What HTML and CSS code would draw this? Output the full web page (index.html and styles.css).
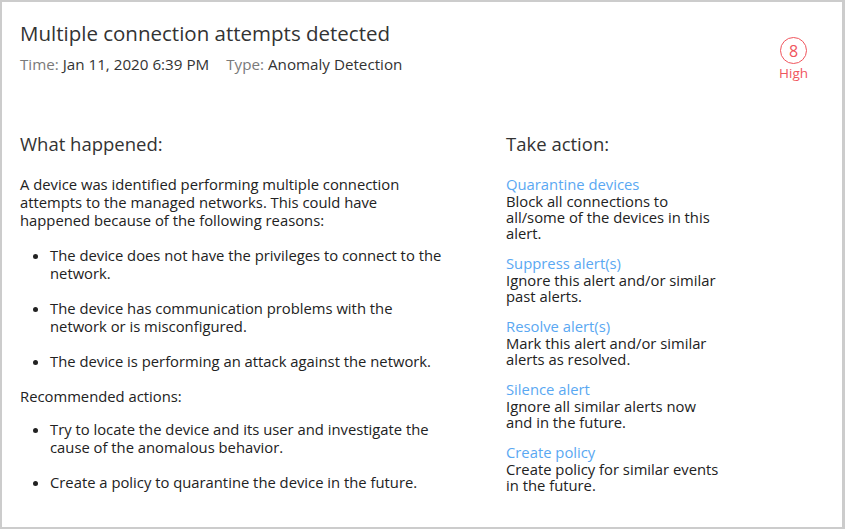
FILE: index.html
```html
<!DOCTYPE html>
<html lang="en">
<head>
  <meta charset="UTF-8">
  <title>Alert details</title>
  <link rel="stylesheet" href="styles.css">
</head>
<body>
  <div class="alert-card">
    <!-- Header -->
    <div class="alert-header">
      <div class="alert-title-block">
        <h1 class="alert-title">Multiple connection attempts detected</h1>
        <div class="alert-meta">
          <span><span class="meta-label">Time:</span> Jan 11, 2020 6:39 PM</span>
          <span><span class="meta-label">Type:</span> Anomaly Detection</span>
        </div>
      </div>
      <div class="severity">
        <div class="severity-circle">8</div>
        <div class="severity-text">High</div>
      </div>
    </div>

    <!-- Body -->
    <div class="alert-body">
      <div class="what-happened">
        <h2>What happened:</h2>
        <p>A device was identified performing multiple connection attempts to the managed networks. This could have happened because of the following reasons:</p>
        <ul>
          <li>The device does not have the privileges to connect to the network.</li>
          <li>The device has communication problems with the network or is misconfigured.</li>
          <li>The device is performing an attack against the network.</li>
        </ul>
        <p>Recommended actions:</p>
        <ul class="recommended">
          <li>Try to locate the device and its user and investigate the cause of the anomalous behavior.</li>
          <li>Create a policy to quarantine the device in the future.</li>
        </ul>
      </div>

      <div class="take-action">
        <h2>Take action:</h2>
        <div class="action">
          <a href="#">Quarantine devices</a>
          <p>Block all connections to all/some of the devices in this alert.</p>
        </div>
        <div class="action">
          <a href="#">Suppress alert(s)</a>
          <p>Ignore this alert and/or similar past alerts.</p>
        </div>
        <div class="action">
          <a href="#">Resolve alert(s)</a>
          <p>Mark this alert and/or similar alerts as resolved.</p>
        </div>
        <div class="action">
          <a href="#">Silence alert</a>
          <p>Ignore all similar alerts now and in the future.</p>
        </div>
        <div class="action">
          <a href="#">Create policy</a>
          <p>Create policy for similar events in the future.</p>
        </div>
      </div>
    </div>
  </div>
</body>
</html>
```

FILE: styles.css
```css
/* Base */
body {
  font-family: 'Open Sans', sans-serif;
  margin: 0;
  padding: 0;
  background-color: #cccccc;
  color: #222;
}

.alert-card {
  box-sizing: border-box;
  width: 842px;
  height: 529px;
  background-color: white;
  border: 2px solid #cccccc;
  border-right: none;
  padding: 16px 18px 0 18px;
}

/* Header */
.alert-header {
  display: flex;
  justify-content: space-between;
  align-items: flex-start;
}

.alert-title {
  margin: 0;
  font-size: 20.5px;
  font-weight: 400;
  color: #333;
  line-height: 30px;
}

.alert-meta {
  display: flex;
  gap: 17px;
  margin-top: 6px;
  font-size: 15.2px;
  line-height: 20px;
  color: #333;
}

.meta-label {
  color: #7a7a7a;
}

.severity {
  display: flex;
  flex-direction: column;
  align-items: center;
  margin-top: 19px;
  margin-right: 16px;
  color: #f0555d;
}

.severity-circle {
  box-sizing: border-box;
  width: 27px;
  height: 27px;
  border: 1.5px solid #f0555d;
  border-radius: 50%;
  display: flex;
  justify-content: center;
  align-items: center;
  font-size: 16px;
}

.severity-text {
  font-size: 13.5px;
  line-height: 16px;
  margin-top: 1px;
}

/* Body columns */
.alert-body {
  display: flex;
  margin-top: 51px;
}

.alert-body h2 {
  margin: 0 0 19px;
  font-size: 18.5px;
  font-weight: 400;
  color: #333;
  line-height: 24px;
}

.what-happened {
  width: 425px;
  font-size: 14.8px;
  line-height: 18px;
}

.what-happened p {
  margin: 0;
}

.what-happened ul {
  margin: 17px 0;
  padding-left: 30px;
}

.what-happened ul.recommended {
  margin-top: 15px;
}

.what-happened li {
  margin-bottom: 17px;
}

.what-happened li:last-child {
  margin-bottom: 0;
}

.take-action {
  margin-left: 61px;
  width: 218px;
  font-size: 14.8px;
  line-height: 16px;
}

.action {
  margin-bottom: 13px;
}

.action a {
  color: #5aa8f2;
  text-decoration: none;
  display: block;
  line-height: 18px;
}

.action p {
  margin: 0;
}
```
